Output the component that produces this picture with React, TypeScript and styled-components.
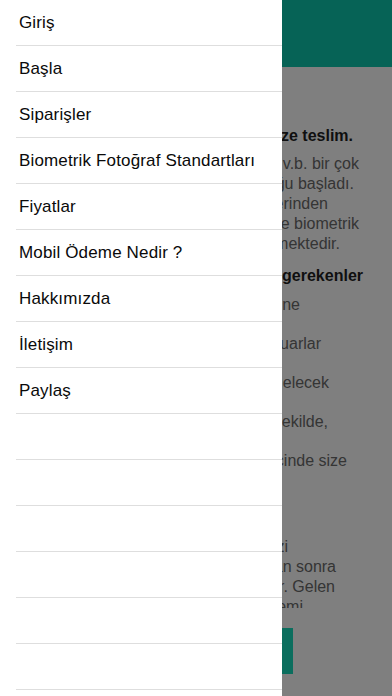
import React from "react";
import styled, { createGlobalStyle } from "styled-components";

const GlobalStyle = createGlobalStyle`
  html, body {
    margin: 0;
    padding: 0;
    width: 392px;
    height: 696px;
    overflow: hidden;
    background: #ffffff;
    font-family: "Liberation Sans", Arial, Helvetica, sans-serif;
  }
  * { box-sizing: border-box; }
`;

const Screen = styled.div`
  position: relative;
  width: 392px;
  height: 696px;
  overflow: hidden;
  background: #ffffff;
`;

/* ---------- underlying page ---------- */

const Page = styled.div`
  display: flex;
  flex-direction: column;
  height: 100%;
`;

const Header = styled.header`
  height: 67px;
  flex: 0 0 67px;
  background: #0cc6ac;
`;

const ScrollArea = styled.div`
  display: flex;
  flex-direction: column;
  height: 541px;
  flex: 0 0 541px;
  overflow: hidden;
  padding: 59px 0 0 16px;
`;

const Line = styled.div<{ $end: number; $top?: number }>`
  flex: 0 0 auto;
  width: ${(p) => p.$end - 16}px;
  margin-top: ${(p) => p.$top ?? 0}px;
  text-align: right;
  white-space: nowrap;
  font-size: 16px;
  line-height: 20px;
  color: #6a6a6a;
`;

const Heading = styled(Line)`
  font-weight: 700;
  color: #1e1e1e;
`;

const ListItem = styled(Line)`
  flex: 0 0 39px;
  height: 39px;
`;

const ButtonRow = styled.div`
  display: flex;
  padding: 20px 0 0 16px;
`;

const OrderButton = styled.div`
  width: 277px;
  height: 46px;
  background: #16dcbc;
`;

const Scrim = styled.div`
  position: absolute;
  inset: 0;
  background: rgba(0, 0, 0, 0.5);
`;

/* ---------- drawer ---------- */

const Drawer = styled.nav`
  position: absolute;
  top: 0;
  left: 0;
  width: 282px;
  height: 100%;
  background: #ffffff;
  overflow: hidden;
`;

const MenuList = styled.ul`
  list-style: none;
  margin: 0;
  padding: 0 0 0 16px;
  display: flex;
  flex-direction: column;
`;

const MenuItem = styled.li`
  height: 46px;
  flex: 0 0 46px;
  display: flex;
  align-items: center;
  padding: 1px 0 0 3px;
  border-bottom: 1px solid #dedede;
  font-size: 17px;
  color: #0a0a0a;
  letter-spacing: 0.15px;
`;

const menu = [
  "Giriş",
  "Başla",
  "Siparişler",
  "Biometrik Fotoğraf Standartları",
  "Fiyatlar",
  "Mobil Ödeme Nedir ?",
  "Hakkımızda",
  "İletişim",
  "Paylaş",
  "",
  "",
  "",
  "",
  "",
  "",
];

export default function App() {
  return (
    <>
      <GlobalStyle />
      <Screen>
        <Page>
          <Header />
          <ScrollArea>
            <Heading $end={353}>Fotoğrafınız adresinize teslim.</Heading>
            <Line $end={359} $top={8}>Pasaport, vize, ehliyet v.b. bir çok</Line>
            <Line $end={354}>fotoğraf zorunluğu başladı.</Line>
            <Line $end={328}>Uygulamamız ile her yerinden</Line>
            <Line $end={359}>uygun şekilde biometrik</Line>
            <Line $end={340}>fotoğraf edinebilmektedir.</Line>
            <Heading $end={363} $top={12}>Fotoğraf için gerekenler</Heading>
            <ListItem $end={300} $top={9}>Beyaz bir zemine</ListItem>
            <ListItem $end={321}>Gözlük ve aksesuarlar</ListItem>
            <ListItem $end={329}>Işık yüzünüze eşit gelecek</ListItem>
            <ListItem $end={328}>Omuzlar görünecek şekilde,</ListItem>
            <ListItem $end={347}>Fotoğraflar 2 gün içinde size</ListItem>
            <ListItem $end={240}>teslim edilir.</ListItem>
            <Line $end={288} $top={8}>Sipariş için bizi</Line>
            <Line $end={336}>Onayladıktan sonra</Line>
            <Line $end={335}>kargoya verilir. Gelen</Line>
            <Line $end={303}>ödeme sistemi</Line>
          </ScrollArea>
          <ButtonRow>
            <OrderButton />
          </ButtonRow>
        </Page>
        <Scrim />
        <Drawer>
          <MenuList>
            {menu.map((label, i) => (
              <MenuItem key={i}>{label}</MenuItem>
            ))}
          </MenuList>
        </Drawer>
      </Screen>
    </>
  );
}
